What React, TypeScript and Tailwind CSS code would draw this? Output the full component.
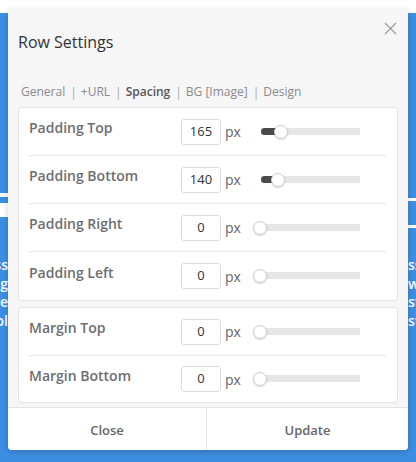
import React from "react";

const rows1 = [
  { label: "Padding Top", value: 165 },
  { label: "Padding Bottom", value: 140 },
  { label: "Padding Right", value: 0 },
  { label: "Padding Left", value: 0 },
];
const rows2 = [
  { label: "Margin Top", value: 0 },
  { label: "Margin Bottom", value: 0 },
];

function Slider({ value }: { value: number }) {
  const thumb = 1 + value * 0.127;
  return (
    <div className="relative w-[108px] h-[16px] ml-[11px]">
      <div className="absolute left-[9px] right-0 top-[4px] h-[7px] bg-[#e6e6e6]" />
      {value > 0 && (
        <div
          className="absolute left-[9px] top-[4px] h-[7px] bg-[#4a4a4a] rounded-l-full"
          style={{ width: thumb + 7 - 9 }}
        />
      )}
      <div
        className="absolute top-[1px] w-[14px] h-[14px] rounded-full bg-white border border-[#cfcfcf] shadow-[0_1px_2px_rgba(0,0,0,0.15)]"
        style={{ left: thumb }}
      />
    </div>
  );
}

function Row({ label, value, last, h }: { label: string; value: number; last: boolean; h: string }) {
  return (
    <div className={"ml-[10px] mr-[11px] flex items-center " + h + " " + (last ? "" : "border-b border-[#e6e6e6]")}>
      <div className="w-[152px] text-[14px] font-semibold text-[#6e6e6e] mb-[8px]">{label}</div>
      <div className="w-[40px] h-[26px] border border-[#dcdcdc] rounded-[3px] bg-white flex items-center justify-center text-[13px] text-[#333]">
        {value}
      </div>
      <div className="ml-[4px] text-[14px] text-[#666]">px</div>
      <Slider value={value} />
    </div>
  );
}

function EdgeText({ side, lines }: { side: "left" | "right"; lines: string[] }) {
  return (
    <div
      className={
        "w-[8px] overflow-hidden flex flex-col text-[14px] leading-[18.5px] whitespace-nowrap " +
        (side === "left" ? "items-end" : "items-start")
      }
    >
      {lines.map((l) => (
        <div key={l} className="flex-none">{l}</div>
      ))}
    </div>
  );
}

export default function App() {
  return (
    <div
      className="relative w-[416px] h-[462px] overflow-hidden bg-white"
      style={{ fontFamily: '"Open Sans", "Liberation Sans", sans-serif' }}
    >
      <div className="absolute left-0 right-0 top-[13px] bottom-0 bg-[#3d8ee3] text-white font-semibold">
        <div className="mt-[176px] flex justify-between">
          <div className="w-[8px] h-[40px] overflow-hidden flex justify-end">
            <div className="flex flex-col gap-[6px] pt-[4px]">
              <div className="w-[10px] h-[4px] bg-white" />
              <div className="w-[10px] h-[14px] bg-white" />
            </div>
          </div>
          <div className="w-[8px] h-[40px] overflow-hidden">
            <div className="flex flex-col gap-[24px] pt-[9px]">
              <div className="w-[10px] h-[3px] bg-white" />
              <div className="w-[10px] h-[3px] bg-white" />
            </div>
          </div>
        </div>
        <div className="mt-[27px] flex justify-between">
          <EdgeText side="left" lines={["business", "designing", "are", "tool"]} />
          <EdgeText side="right" lines={["ss", "with", "style", "stack"]} />
        </div>
      </div>

      <div className="absolute left-[8px] top-[9px] w-[400px] h-[441px] bg-[#f6f6f6] rounded-[4px] shadow-[0_2px_6px_rgba(0,0,0,0.2)] flex flex-col overflow-hidden">
        <div className="relative h-[98px] px-[10px]">
          <div className="pt-[21px] text-[16px] text-[#333] leading-[24px]">Row Settings</div>
          <svg className="absolute right-[11px] top-[13px]" width="13" height="13" viewBox="0 0 13 13">
            <path d="M1 1 L12 12 M12 1 L1 12" stroke="#9a9a9a" strokeWidth="1.1" />
          </svg>
          <div className="mt-[27px] ml-[3px] text-[12px] text-[#8a8a8a] flex items-center">
            <span>General</span>
            <span className="ml-[5px] mr-[4px] mt-[3px] text-[#aaa]">|</span>
            <span>+URL</span>
            <span className="ml-[5px] mr-[4px] mt-[3px] text-[#aaa]">|</span>
            <span className="font-semibold text-[#555]">Spacing</span>
            <span className="ml-[5px] mr-[4px] mt-[3px] text-[#aaa]">|</span>
            <span>BG [Image]</span>
            <span className="ml-[5px] mr-[4px] mt-[3px] text-[#aaa]">|</span>
            <span>Design</span>
          </div>
        </div>

        <div className="mx-[10px] bg-white border border-[#e3e3e3] rounded-[4px]">
          {rows1.map((r, i) => (
            <Row key={r.label} label={r.label} value={r.value} last={i === rows1.length - 1} h="h-[48px]" />
          ))}
        </div>
        <div className="mx-[10px] mt-[6px] bg-white border border-[#e3e3e3] rounded-[4px]">
          {rows2.map((r, i) => (
            <Row
              key={r.label}
              label={r.label}
              value={r.value}
              last={i === rows2.length - 1}
              h={i === rows2.length - 1 ? "h-[46px]" : "h-[48px]"}
            />
          ))}
        </div>

        <div className="mt-auto h-[43px] bg-white border-t border-[#e3e3e3] flex text-[13px] font-semibold text-[#666]">
          <div className="w-[199px] pt-[3px] flex items-center justify-center border-r border-[#e3e3e3]">Close</div>
          <div className="flex-1 pt-[3px] flex items-center justify-center">Update</div>
        </div>
      </div>
    </div>
  );
}
